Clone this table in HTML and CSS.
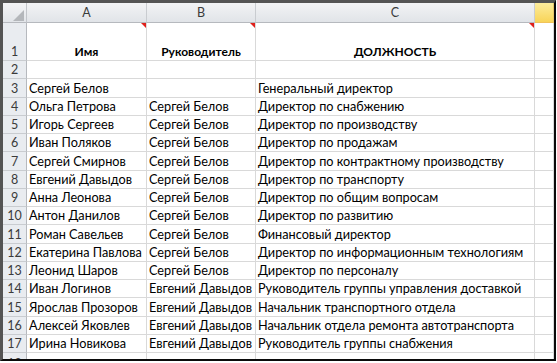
FILE: index.html
```html
<!DOCTYPE html>
<html lang="ru">
<head>
<meta charset="utf-8">
<title>Сотрудники</title>
<link rel="stylesheet" href="styles.css">
</head>
<body>
<div class="frame">
  <div class="sheet">
    <div class="corner"><svg class="corner-mark" width="11" height="11" viewBox="0 0 11 11"><polygon points="11,0 11,11 0,11" fill="#b4b7bb"/></svg></div>
    <div class="colhead">A</div>
    <div class="colhead">B</div>
    <div class="colhead">C</div>
    <div class="colhead sel"></div>

    <div class="rowhead">1</div>
    <div class="cell title note">Имя</div>
    <div class="cell title note">Руководитель</div>
    <div class="cell title note">ДОЛЖНОСТЬ</div>
    <div class="cell"></div>

    <div class="rowhead">2</div><div class="cell"></div><div class="cell"></div><div class="cell"></div><div class="cell"></div>

    <div class="rowhead">3</div><div class="cell">Сергей Белов</div><div class="cell"></div><div class="cell">Генеральный директор</div><div class="cell"></div>
    <div class="rowhead">4</div><div class="cell">Ольга Петрова</div><div class="cell">Сергей Белов</div><div class="cell">Директор по снабжению</div><div class="cell"></div>
    <div class="rowhead">5</div><div class="cell">Игорь Сергеев</div><div class="cell">Сергей Белов</div><div class="cell">Директор по производству</div><div class="cell"></div>
    <div class="rowhead">6</div><div class="cell">Иван Поляков</div><div class="cell">Сергей Белов</div><div class="cell">Директор по продажам</div><div class="cell"></div>
    <div class="rowhead">7</div><div class="cell">Сергей Смирнов</div><div class="cell">Сергей Белов</div><div class="cell">Директор по контрактному производству</div><div class="cell"></div>
    <div class="rowhead">8</div><div class="cell">Евгений Давыдов</div><div class="cell">Сергей Белов</div><div class="cell">Директор по транспорту</div><div class="cell"></div>
    <div class="rowhead">9</div><div class="cell">Анна Леонова</div><div class="cell">Сергей Белов</div><div class="cell">Директор по общим вопросам</div><div class="cell"></div>
    <div class="rowhead">10</div><div class="cell">Антон Данилов</div><div class="cell">Сергей Белов</div><div class="cell">Директор по развитию</div><div class="cell"></div>
    <div class="rowhead">11</div><div class="cell">Роман Савельев</div><div class="cell">Сергей Белов</div><div class="cell">Финансовый директор</div><div class="cell"></div>
    <div class="rowhead">12</div><div class="cell">Екатерина Павлова</div><div class="cell">Сергей Белов</div><div class="cell">Директор по информационным технологиям</div><div class="cell"></div>
    <div class="rowhead">13</div><div class="cell">Леонид Шаров</div><div class="cell">Сергей Белов</div><div class="cell">Директор по персоналу</div><div class="cell"></div>
    <div class="rowhead">14</div><div class="cell">Иван Логинов</div><div class="cell">Евгений Давыдов</div><div class="cell">Руководитель группы управления доставкой</div><div class="cell"></div>
    <div class="rowhead">15</div><div class="cell">Ярослав Прозоров</div><div class="cell">Евгений Давыдов</div><div class="cell">Начальник транспортного отдела</div><div class="cell"></div>
    <div class="rowhead">16</div><div class="cell">Алексей Яковлев</div><div class="cell">Евгений Давыдов</div><div class="cell">Начальник отдела ремонта автотранспорта</div><div class="cell"></div>
    <div class="rowhead">17</div><div class="cell">Ирина Новикова</div><div class="cell">Евгений Давыдов</div><div class="cell">Руководитель группы снабжения</div><div class="cell"></div>
    <div class="rowhead">18</div><div class="cell"></div><div class="cell"></div><div class="cell"></div><div class="cell"></div>
  </div>
</div>
</body>
</html>
```

FILE: styles.css
```css
html, body {
  margin: 0;
  padding: 0;
  background: #ffffff;
}

.frame {
  width: 551px;
  height: 356px;
  border-top: 3px solid #545454;
  border-left: 3px solid #545454;
  border-right: 2px solid #0a0a0a;
  border-bottom: 2px solid #0a0a0a;
  overflow: hidden;
  font-family: Lato, "Open Sans", sans-serif;
  font-size: 12.7px;
  color: #000;
}

.sheet {
  display: grid;
  grid-template-columns: 24px 120px 109px 279px 19px;
  grid-template-rows: 20px 38px repeat(16, 18.25px) 20px;
}

.sheet > div {
  box-sizing: border-box;
  border-right: 1px solid #d9d9d9;
  border-bottom: 1px solid #d9d9d9;
  white-space: nowrap;
  overflow: hidden;
}

.corner {
  background: linear-gradient(#f3f4f6, #e2e5e9);
  border-right-color: #c2c5ca !important;
  border-bottom-color: #b6b9be !important;
  display: flex;
  justify-content: flex-end;
  align-items: flex-end;
  padding: 0 2px 1px 0;
}

.colhead {
  background: linear-gradient(#f2f3f5, #e1e4e8);
  border-right-color: #c9ccd0 !important;
  border-bottom-color: #b6b9be !important;
  color: #3b3b3b;
  display: flex;
  justify-content: center;
  align-items: center;
  font-size: 12.5px;
}

.colhead.sel {
  background: linear-gradient(#fcec9c, #f8d458);
  border-bottom-color: #f1c35a !important;
  border-right-color: #e7c46a !important;
}

.rowhead {
  background: #e9ecf0;
  border-right-color: #b6b9be !important;
  border-bottom-color: #c9ccd0 !important;
  color: #3b3b3b;
  display: flex;
  justify-content: center;
  align-items: flex-end;
  line-height: 17px;
  font-size: 12.5px;
}

.cell {
  display: flex;
  align-items: flex-end;
  padding-left: 2px;
  line-height: 17px;
}

.title {
  justify-content: center;
  font-weight: bold;
  font-size: 12px;
  padding-left: 0;
}

.note {
  position: relative;
}

.note::after {
  content: "";
  position: absolute;
  top: 0;
  right: 0;
  width: 0;
  height: 0;
  border-top: 5px solid #e0201b;
  border-left: 5px solid transparent;
}
```
